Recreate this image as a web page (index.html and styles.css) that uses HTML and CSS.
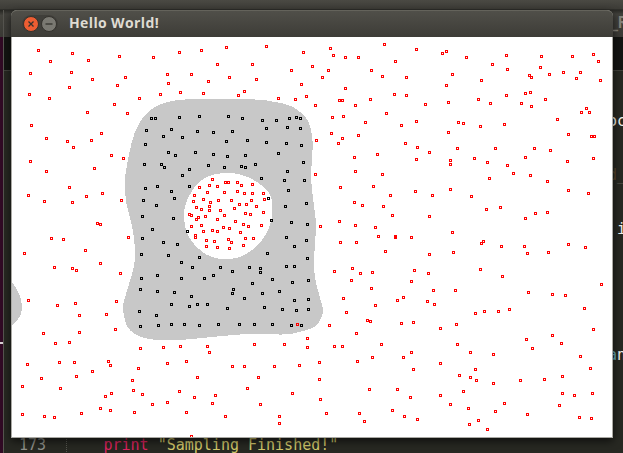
FILE: index.html
```html
<!DOCTYPE html>
<html lang="en">
<head>
<meta charset="utf-8">
<title>Hello World!</title>
<link rel="stylesheet" href="styles.css">
</head>
<body>
<div class="desktop">
  <div class="panel"></div>
  <div class="workspace">
    <aside class="terminal"><div class="terminal-head"></div><div class="terminal-body"><span class="cursor"></span></div></aside>
    <main class="editor">
      <div class="editor-title">_R</div>
      <div class="tabs"></div>
      <div class="code">
        <div class="line l3"><span>oc</span></div>
        <div class="line l6 dim"><span>d<i>_</i></span></div>
        <div class="line l9"><span>&nbsp;i</span></div>
        <div class="line l16"><span><b>a</b>n</span></div>
        <div class="line last"><span class="number">173</span><span class="guide"></span><span class="keyword">print</span><span class="string">"Sampling Finished!"</span></div>
      </div>
    </main>
  </div>
  <section class="window">
    <header class="titlebar">
      <div class="buttons">
        <svg class="button close" viewBox="0 0 16 16"><circle cx="8" cy="8" r="7.5"/><path d="M5.5 5.5l5 5M10.5 5.5l-5 5"/></svg>
        <svg class="button minimize" viewBox="0 0 16 16"><circle cx="8" cy="8" r="7.5"/><path d="M4.5 8h7"/></svg>
      </div>
      <h1>Hello World!</h1>
    </header>
    <svg class="plot" id="plot" viewBox="0 0 600 400" width="600" height="400"></svg>
  </section>
</div>
<script src="plot.js"></script>
</body>
</html>
```
FILE: styles.css
```css
* { box-sizing: border-box; }
body { margin: 0; overflow: hidden; background: #272822; }
.desktop { position: relative; display: flex; flex-direction: column; width: 623px; height: 453px; overflow: hidden; }
.panel { height: 10px; flex: none; background: linear-gradient(#4a4943, #3e3d38 85%, #282824); }
.workspace { display: flex; flex: 1; }
.terminal { display: flex; flex-direction: column; width: 6px; border-right: 1px solid #575650; }
.terminal-head { height: 27px; background: linear-gradient(#252521, #45443e 20%, #3a3935); }
.terminal-body { flex: 1; padding-top: 305px; background: #300a24; }
.cursor { display: block; width: 3px; height: 2px; background: #d8d1d5; }
.editor { flex: 1; display: flex; flex-direction: column; font: 15px/18px "DejaVu Sans Mono", monospace; color: #f0f0ea; background: #272822; }
.editor-title { height: 27px; padding: 4px 0 0 605px; overflow: hidden; background: linear-gradient(#292925, #41403b 15%, #3b3a36); color: #85837b; font-weight: bold; white-space: nowrap; }
.tabs { height: 34px; background: #131412; border-bottom: 1px solid #40413b; }
.code { flex: 1; display: grid; grid-template-rows: repeat(21, 18px); padding-top: 5px; height: 382px; overflow: hidden; }
.line { display: flex; padding-left: 604px; white-space: pre; overflow: hidden; }
.l3 { grid-row: 3; }
.l6 { grid-row: 6; }
.l9 { grid-row: 9; }
.l16 { grid-row: 16; }
.dim { color: #57442c; }
.dim i { color: #605f55; font-style: normal; }
.line b { color: #66aabd; font-weight: normal; }
.last { grid-row: 21; padding-left: 14px; }
.number { width: 48px; padding-left: 1px; color: #8f908a; }
.guide { width: 37.5px; margin-left: 0; border-left: 1px dotted #55564f; }
.keyword { width: 54.2px; color: #dc235f; }
.string { color: #d2c86b; }
.window { position: absolute; left: 11px; top: 10px; width: 602px; height: 428px; border-radius: 6px 6px 0 0; box-shadow: 0 3px 9px rgba(0, 0, 0, .65); background: #aaa9a4; }
.titlebar { display: flex; align-items: center; height: 27px; padding-left: 10.5px; border-radius: 6px 6px 0 0; border-top: 1px solid #64635b; background: linear-gradient(#504f49, #3d3c37); }
.buttons { display: flex; gap: 2px; height: 18px; padding: 1px; border-radius: 9px; background: #403f3a; }
.button { width: 16px; height: 16px; stroke: #34322d; stroke-width: 1; }
.button path { fill: none; stroke-width: 1.3; }
.close circle { fill: #ed5d32; }
.minimize circle { fill: #7a7972; }
.titlebar h1 { margin: -2px 0 0 11.5px; font: bold 14px/20px "Open Sans", "Noto Sans", sans-serif; letter-spacing: .38px; color: #dfdbd2; white-space: nowrap; }
.plot { display: block; margin: 0 1px; background: #fff; }
.region { fill: #c8c8c8; fill-rule: evenodd; shape-rendering: crispEdges; }
.sample { shape-rendering: crispEdges; }
.outside { fill: #f00; }
.inside { fill: #000; }
```
FILE: plot.js
```js
// Closed outlines of the classified regions, in plot pixels.
const outlines = [
  '114,134 118,113 123,95 133,78 147,68 167,63 200,62 243,62.5 263,65 280,69.5 294,81 299,93 300.7,107 299.8,125 299,141 301,161 303,177 304,189 303,207 302,224 303,241 307,257 310,268 311,273 309,281 302,290 283,296 270,297.5 237,297 200,300 180,302 157,303.5 137,302 123,297 115,289 111.5,276 111,268 117,247 122,229 123,214 121,194 117,177 114,164 113,145',
  '172,181 174,166 182,151 190,143 200,138 215,136 230,138 245,145 257,156 260,166 260,179 257,191 250,203 240,213 228,220 215,222 203,221 192,216 182,207 175,196',
  '-10,240 0,245 6.5,256 9.6,266 8.5,278 0,288 -10,292'
];

// Samples are stored per tile in thirds of a pixel: [x origin, y origin, outside, inside].
const tiles = [
  [0, 0,
    '79,40 181,49 115,73 229,70 322,58 424,61 502,46 568,40 55,109 178,106 241,127 340,121 172,151 316,145 466,112 538,112 469,139 589,133 52,172 112,184 382,184 445,172 505,166 574,169 307,202 226,226 346,229 58,265 103,304 166,313 184,331 238,310 268,289 298,355 334,364 55,373 247,394 103,403',
    '418,244 430,244 502,241 562,238 403,280 478,277 454,298 511,301 556,283 400,322 469,346 490,355 550,346 397,382 448,382 457,391 532,397 589,385'],
  [200, 0,
    '43,31 163,28 274,46 355,34 364,55 400,61 439,61 517,22 550,73 16,82 121,82 301,88 238,100 349,100 478,100 52,121 133,127 331,121 511,118 583,121 268,142 97,163 79,175 199,184 250,187 283,178 310,205 400,154 382,190 391,190 475,187 430,205 547,172 583,175 523,229 361,241 394,238 460,256 568,265 358,289 391,304 379,319 439,295 313,310 580,319 427,361 496,352 430,403',
    '49,238 91,244 151,250 193,250 232,244 253,241 265,244 61,283 4,286 163,274 226,271 265,274 43,313 106,310 163,316 223,319 268,325 4,352 46,358 100,355 199,349 37,391 88,388 100,391 130,382 274,376 226,403'],
  [400, 0,
    '13,37 91,49 103,43 163,61 283,55 388,58 481,58 544,52 559,73 241,82 286,97 385,91 121,112 208,130 352,115 358,121 412,112 454,106 505,106 493,124 565,130 103,145 283,175 340,169 355,166 199,187 235,199 328,199 358,208 400,187 40,202 109,196 523,214 508,226 532,226 13,253 139,256 154,259 205,268 277,262 436,247 109,286 469,292 538,298 547,298 16,331 52,346 136,334 250,334 367,334 415,340 13,367 115,370 115,382 187,364 226,376 286,385 340,361 466,373 544,364',
    ''],
  [0, 134,
    '172,49 49,73 97,91 223,76 271,67 181,94 328,88 256,157 265,160 118,202 154,205 349,199 37,247 220,238 127,289 181,292 193,298 265,277 325,307 49,388 190,397 313,391 136,403 562,49 592,43 547,73 586,64 544,91 574,85 595,94 553,109 568,115 592,106 592,118 532,130 538,133 559,139 553,145 580,136 538,166 568,163 574,181 550,193 550,199 583,208 583,226',
    '511,13 400,52 436,46 478,61 532,46 394,88 487,82 433,103 391,136 484,142 421,175 526,181 391,202 454,214 496,220 388,250 469,253 562,259 508,274 541,289 388,322 436,313 508,322 577,322 385,355 436,361 487,364 538,376 478,400 556,400 586,400'],
  [200, 134,
    '1,25 16,46 40,34 49,34 76,34 88,43 121,40 37,64 76,61 97,67 121,67 154,67 157,85 19,88 58,88 118,88 82,100 103,100 133,106 67,112 25,118 37,133 100,127 115,130 154,124 16,145 70,151 94,160 109,166 148,163 34,169 52,172 1,178 16,181 85,184 7,211 49,205 58,214 100,202 124,202 94,223 16,229 52,232 310,10 511,10 385,49 484,46 535,73 427,94 451,103 514,106 541,133 325,166 382,151 430,163 490,169 499,196 550,196 550,199 598,199 385,214 433,214 520,241 367,301 421,292 445,307 481,304 418,328 598,331 478,352 394,382 574,379 556,388 490,403',
    '148,22 217,28 277,28 229,58 169,82 220,106 283,97 178,148 238,154 286,160 223,199 283,208 247,226 166,247 286,262 25,289 61,301 112,289 145,292 145,304 223,286 247,286 4,313 181,325 121,337 241,334 289,328 64,355 61,367 151,367 202,361 97,382 247,388 289,385'],
  [400, 134,
    '304,7 355,13 232,22 406,31 10,61 61,73 115,55 178,76 469,58 529,67 223,115 265,109 52,136 340,142 370,127 406,124 121,184 208,217 214,211 268,226 337,226 346,247 409,244 469,220 520,229 52,250 124,244 7,298 49,307 205,295 271,316 568,340 64,358 130,358 349,364 421,370 460,373 46,391 67,400',
    ''],
  [0, 268,
    '202,31 283,28 94,85 202,82 310,73 130,115 172,112 385,130 454,127 505,124 586,124 592,142 46,178 142,172 187,172 289,169 295,181 379,190 466,175 523,169 88,220 193,214 241,199 361,226 556,217 31,244 145,250 280,274 298,265 364,256 391,268 502,259 547,277 421,298 466,292 265,310 295,316 31,328 97,334 127,337 208,325 367,322 523,322 538,394',
    '382,19 433,31 532,4 385,64 439,61 478,58 517,58 562,61'],
  [200, 268,
    '256,58 403,22 352,61 466,46 475,49 568,55 433,85 286,100 286,127 127,118 217,118 367,124 391,124 508,118 598,142 481,157 574,157 436,169 322,172 61,184 97,184 187,184 262,181 139,217 322,223 106,250 241,265 10,271 1,295 145,298 325,283 472,253 556,253 595,277 343,325 442,325 541,316 577,334 40,334 202,334 202,355 457,349',
    '46,10 157,7 211,13 253,16 289,13 19,58 82,58 127,58 181,58 238,61 268,61'],
  [400, 268,
    '190,25 217,19 259,19 292,13 517,10 4,52 133,58 85,70 544,73 343,103 421,91 448,115 136,118 361,130 175,142 244,148 505,154 85,175 4,193 190,193 535,190 142,211 175,217 193,226 244,235 325,226 397,223 451,214 154,259 85,271 451,265 487,271 541,265 115,298 277,295 442,301 169,310 250,319 346,328 502,337 538,340 16,343 172,358 199,346 226,373',
    '']
];

const plot = document.getElementById('plot');
const parse = text => text ? text.split(' ').map(pair => pair.split(',').map(Number)) : [];

function addPath(className, d) {
  const path = document.createElementNS('http://www.w3.org/2000/svg', 'path');
  path.setAttribute('class', className);
  path.setAttribute('d', d);
  plot.append(path);
}

// Catmull-Rom spline through the outline points.
function smooth(text) {
  const p = parse(text);
  const n = p.length;
  let d = `M${p[0]}`;
  for (let i = 0; i < n; i++) {
    const a = p[(i + n - 1) % n], b = p[i], c = p[(i + 1) % n], e = p[(i + 2) % n];
    d += `C${b[0] + (c[0] - a[0]) / 6},${b[1] + (c[1] - a[1]) / 6} ${c[0] - (e[0] - b[0]) / 6},${c[1] - (e[1] - b[1]) / 6} ${c}`;
  }
  return d + 'Z';
}

addPath('region', outlines.map(smooth).join(''));
// Each sample is a 3px frame with a 1px hole wound the other way.
for (const [ox, oy, outside, inside] of tiles) {
  const squares = text => parse(text)
    .map(([x, y]) => `M${ox + Math.floor(x / 3) - 1} ${oy + Math.floor(y / 3) - 1}h3v3h-3zm1 1v1h1v-1z`).join('');
  addPath('sample outside', squares(outside));
  addPath('sample inside', squares(inside));
}
```
